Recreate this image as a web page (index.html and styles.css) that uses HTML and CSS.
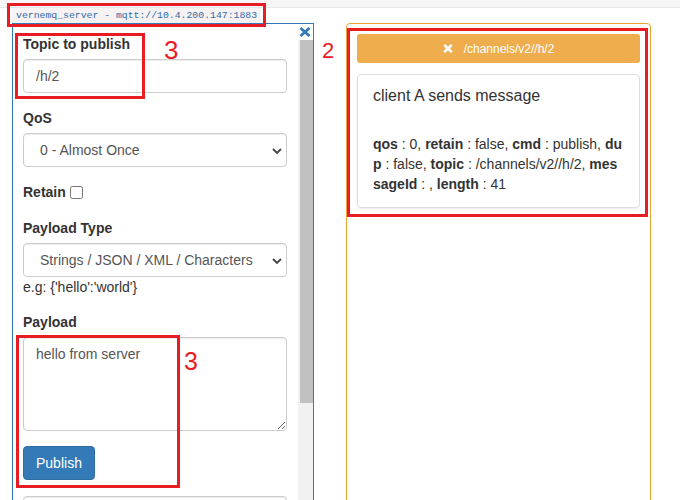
FILE: index.html
```html
<!DOCTYPE html>
<html>
<head>
<meta charset="utf-8">
<title>MQTT publish</title>
<link rel="stylesheet" href="styles.css">
</head>
<body>
<div class="shot">
  <div class="topbar"></div>
  <div class="conn"><code class="conn-code">vernemq_server - mqtt://10.4.200.147:1883</code></div>
  <div class="panels">
    <div class="pub-panel">
      <span class="pub-close" title="Close">
        <svg width="12" height="10" viewBox="0 0 12 10"><path d="M1.5 1 L10.5 9 M10.5 1 L1.5 9" stroke="#337ab7" stroke-width="2.8" fill="none"/></svg>
      </span>
      <div class="pub-scroll">
        <form class="pub-form">
          <div class="form-group">
            <label class="lbl">Topic to publish</label>
            <input class="form-control" type="text" value="/h/2">
          </div>
          <div class="form-group">
            <label class="lbl">QoS</label>
            <div class="select-wrap">
              <select class="form-control form-select">
                <option>0 - Almost Once</option>
                <option>1 - At Least Once</option>
                <option>2 - Exactly Once</option>
              </select>
              <svg class="chev" width="10" height="6" viewBox="0 0 10 6"><path d="M1 1 L5 5 L9 1" stroke="#444" stroke-width="1.8" fill="none"/></svg>
            </div>
          </div>
          <div class="form-group group-retain">
            <label class="lbl lbl-inline">Retain<input class="check" type="checkbox"></label>
          </div>
          <div class="form-group">
            <label class="lbl">Payload Type</label>
            <div class="select-wrap">
              <select class="form-control form-select">
                <option>Strings / JSON / XML / Characters</option>
                <option>Base64</option>
              </select>
              <svg class="chev" width="10" height="6" viewBox="0 0 10 6"><path d="M1 1 L5 5 L9 1" stroke="#444" stroke-width="1.8" fill="none"/></svg>
            </div>
            <p class="help">e.g: {'hello':'world'}</p>
          </div>
          <div class="form-group">
            <label class="lbl">Payload</label>
            <textarea class="form-control payload">hello from server</textarea>
          </div>
          <div class="form-group group-btn">
            <button class="btn-primary" type="button">Publish</button>
          </div>
          <div class="form-group">
            <input class="form-control" type="text">
          </div>
        </form>
      </div>
      <div class="vscroll" aria-hidden="true">
        <div class="vscroll-btn"></div>
        <div class="vscroll-thumb"></div>
      </div>
    </div>
    <div class="sub-panel">
      <div class="topic-bar">
        <svg width="10" height="9" viewBox="0 0 10 9"><path d="M1.2 0.8 L8.8 8.2 M8.8 0.8 L1.2 8.2" stroke="#fff" stroke-width="2.6" fill="none"/></svg>
        <span>/channels/v2//h/2</span>
      </div>
      <div class="msg-card">
        <div class="msg-title">client A sends message</div>
        <div class="msg-meta"><b>qos</b> : 0, <b>retain</b> : false, <b>cmd</b> : publish, <b>dup</b> : false, <b>topic</b> : /channels/v2//h/2, <b>messageId</b> : , <b>length</b> : 41</div>
      </div>
    </div>
  </div>

  <div class="mark mark-conn"></div>
  <div class="mark mark-topic"></div>
  <div class="mark mark-payload"></div>
  <div class="mark mark-result"></div>
  <div class="num num-topic">3</div>
  <div class="num num-payload">3</div>
  <div class="num num-result">2</div>
</div>
</body>
</html>
```
FILE: styles.css
```css
* { box-sizing: border-box; }
html, body { margin: 0; height: 100%; overflow: hidden; background: #fff; }
body {
  font-family: "Liberation Sans", Arial, Helvetica, sans-serif;
  font-size: 14px;
  line-height: 20px;
  color: #333;
}
.shot { position: relative; height: 100%; }

.topbar { height: 8px; background: #f6f6f6; border-bottom: 1px solid #e6e6e6; }

.conn { padding-left: 12px; height: 15px; }
.conn-code {
  display: inline-block;
  vertical-align: top;
  height: 15px;
  padding: 2px 4px;
  font-family: "Liberation Mono", "DejaVu Sans Mono", monospace;
  font-size: 9.8px;
  line-height: 11px;
  color: #2f6aa8;
  background: #f7f2f4;
}

.panels { display: flex; align-items: flex-start; gap: 32px; padding-left: 12px; }

/* left publish panel */
.pub-panel {
  position: relative;
  flex: 0 0 302px;
  height: 540px;
  display: flex;
  border: 1px solid #337ab7;
}
.pub-close {
  position: absolute;
  top: 3px;
  right: 2px;
  display: block;
  width: 12px;
  height: 10px;
  line-height: 0;
  z-index: 2;
}
.pub-scroll { flex: 1 1 auto; min-width: 0; overflow: hidden; }
.vscroll { flex: 0 0 15px; display: flex; flex-direction: column; background: #f1f1f1; }
.vscroll-btn { height: 16px; background: #fff; }
.vscroll-thumb { height: 363px; margin-left: 2px; background: #c1c1c1; }

.pub-form { padding: 10px 11px 10px 10px; margin: 0; }

.form-group { margin-bottom: 15px; }
.group-retain { margin-top: 2px; margin-bottom: 16px; }
.group-btn { margin-bottom: 16px; }
.lbl { display: block; font-weight: bold; margin-bottom: 5px; }
.lbl-inline { margin-bottom: 0; }
.check {
  width: 13px;
  height: 13px;
  margin: 0 0 0 4px;
  vertical-align: -2px;
}

.form-control {
  display: block;
  width: 100%;
  height: 34px;
  padding: 6px 12px;
  font-family: inherit;
  font-size: 14px;
  line-height: 20px;
  color: #555;
  background: #fff;
  border: 1px solid #ccc;
  border-radius: 4px;
  box-shadow: inset 0 1px 1px rgba(0, 0, 0, .075);
  outline: none;
}
.select-wrap { position: relative; }
.form-select { appearance: none; -webkit-appearance: none; padding-left: 16px; }
.chev { position: absolute; right: 5px; top: 15px; pointer-events: none; }
.help { margin: 0 0 15px; }
.payload { height: 94px; resize: vertical; }

.btn-primary {
  display: inline-block;
  height: 34px;
  padding: 6px 12px;
  font-family: inherit;
  font-size: 14px;
  line-height: 20px;
  color: #fff;
  background: #337ab7;
  border: 1px solid #2e6da4;
  border-radius: 4px;
}

/* right subscription panel */
.sub-panel {
  flex: 0 0 305px;
  height: 540px;
  border: 1px solid #efa232;
  border-radius: 4px;
  padding: 10px;
}
.topic-bar {
  height: 29px;
  display: flex;
  align-items: center;
  justify-content: center;
  gap: 11px;
  background: #f0ad4e;
  color: #fff;
  font-size: 12px;
  border-radius: 3px;
}
.msg-card {
  margin-top: 11px;
  border: 1px solid #ddd;
  border-radius: 4px;
  padding: 10px 15px 13px;
  box-shadow: 0 1px 2px rgba(0, 0, 0, .08);
}
.msg-title { font-size: 16px; line-height: 22px; }
.msg-meta { margin-top: 27px; word-break: break-all; }

/* red annotation overlays */
.mark { position: absolute; border: 3px solid #e81c24; pointer-events: none; }
.mark-conn { left: 7px; top: 3px; width: 259px; height: 24px; }
.mark-topic { left: 15px; top: 33px; width: 130px; height: 66px; }
.mark-payload { left: 16px; top: 335px; width: 164px; height: 153px; }
.mark-result { left: 347px; top: 28px; width: 301px; height: 189px; }

.num { position: absolute; color: #e81c24; line-height: 1; font-family: "Liberation Sans", Arial, sans-serif; }
.num-topic { left: 164px; top: 37px; font-size: 26px; }
.num-payload { left: 184px; top: 349px; font-size: 25px; }
.num-result { left: 322px; top: 40px; font-size: 22px; }
```
